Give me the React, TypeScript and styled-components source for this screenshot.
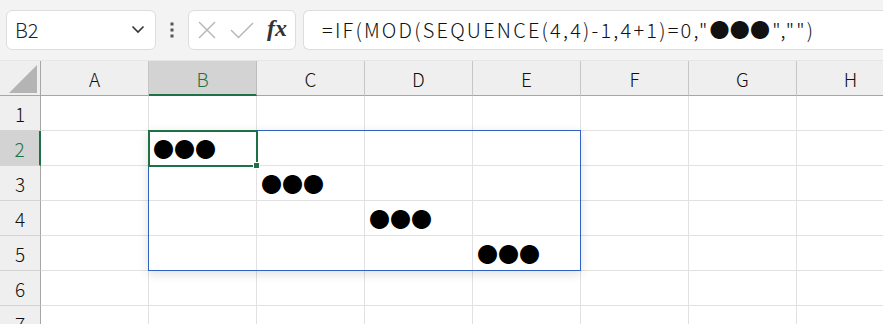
import React from 'react'
import styled, { createGlobalStyle } from 'styled-components'

const GlobalStyle = createGlobalStyle`
  html, body {
    margin: 0;
    padding: 0;
    background: #ffffff;
    overflow: hidden;
  }
  body {
    font-family: "Noto Sans CJK JP", "Noto Sans", sans-serif;
  }
`

const GREEN = '#1e7145'
const BLUE = '#2f62c3'

const Page = styled.div`
  width: 883px;
  height: 324px;
  overflow: hidden;
  background: #ffffff;
`

const Toolbar = styled.div`
  height: 61px;
  box-sizing: border-box;
  display: flex;
  align-items: center;
  padding: 0 0 1px 6px;
  background: #f3f3f3;
  border-bottom: 1px solid #e6e6e6;
`

const Box = styled.div<{ $w?: number }>`
  height: 40px;
  box-sizing: border-box;
  width: ${(p) => (p.$w ? `${p.$w}px` : 'auto')};
  flex: ${(p) => (p.$w ? '0 0 auto' : '1 1 auto')};
  background: #ffffff;
  border: 1px solid #dddddd;
  border-radius: 6px;
  display: flex;
  align-items: center;
`

const NameBox = styled(Box)`
  padding: 0 10px 0 8px;
  justify-content: space-between;
  font-size: 20px;
  font-weight: 300;
  color: #222;
`

const Grip = styled.div`
  width: 32px;
  display: flex;
  justify-content: center;
`

const FxBox = styled(Box)`
  padding: 0 8px;
  justify-content: space-between;
`

const Fx = styled.span`
  font-family: "Liberation Serif", serif;
  font-style: italic;
  font-weight: bold;
  font-size: 24px;
  color: #333;
  margin-top: -3px;
`

const FormulaBox = styled(Box)`
  margin-left: 7px;
  border-right: none;
  border-radius: 6px 0 0 6px;
  padding-left: 18px;
  font-size: 20px;
  font-weight: 300;
  letter-spacing: 2.2px;
  color: #111;
  white-space: nowrap;
`

const Dots = styled.span`
  letter-spacing: 0.3px;
  margin-right: 2px;
`

const Sheet = styled.div`
  display: grid;
  grid-template-columns: 41px repeat(8, 108px);
  grid-template-rows: 35px repeat(8, 35px);
`

const Corner = styled.div`
  background: #efefef;
  border-right: 1px solid #a6a6a6;
  border-bottom: 1px solid #a6a6a6;
  display: flex;
  align-items: flex-end;
  justify-content: flex-end;
  padding: 0 3px 2px 0;
`

const ColHead = styled.div<{ $active?: boolean }>`
  background: ${(p) => (p.$active ? '#d3d3d3' : '#efefef')};
  color: ${(p) => (p.$active ? GREEN : '#111')};
  border-right: 1px solid ${(p) => (p.$active ? '#bdbdbd' : '#c6c6c6')};
  border-bottom: ${(p) => (p.$active ? `2px solid ${GREEN}` : '1px solid #a6a6a6')};
  display: flex;
  align-items: center;
  justify-content: center;
  font-size: 19px;
  font-weight: 300;
  padding-top: ${(p) => (p.$active ? '1px' : '0')};
`

const RowHead = styled.div<{ $active?: boolean }>`
  background: ${(p) => (p.$active ? '#d3d3d3' : '#efefef')};
  color: ${(p) => (p.$active ? GREEN : '#111')};
  border-right: ${(p) => (p.$active ? `2px solid ${GREEN}` : '1px solid #a6a6a6')};
  border-bottom: 1px solid #d4d4d4;
  display: flex;
  align-items: center;
  justify-content: center;
  font-size: 19px;
  font-weight: 300;
`

const Cell = styled.div<{ $col: number; $row: number }>`
  grid-column: ${(p) => p.$col + 2};
  grid-row: ${(p) => p.$row + 1};
  border-right: 1px solid #e1e1e1;
  border-bottom: 1px solid #e1e1e1;
  display: flex;
  align-items: center;
  padding-left: 4px;
  font-size: 21px;
  line-height: 1;
  color: #000;
  white-space: nowrap;
`

const SpillRange = styled.div`
  grid-column: 3 / 7;
  grid-row: 3 / 7;
  margin: -1px 0 0 -1px;
  border: 1px solid ${BLUE};
  box-shadow: 0 3px 10px rgba(0, 0, 0, 0.12);
  pointer-events: none;
  z-index: 1;
`

const Selection = styled.div`
  grid-column: 3 / 4;
  grid-row: 3 / 4;
  margin: -1px;
  border: 2px solid ${GREEN};
  position: relative;
  pointer-events: none;
  z-index: 2;
`

const FillHandle = styled.div`
  position: absolute;
  right: -4px;
  bottom: -4px;
  width: 5px;
  height: 5px;
  background: ${GREEN};
  border: 1px solid #ffffff;
`

const cols = ['A', 'B', 'C', 'D', 'E', 'F', 'G', 'H']
const rows = [1, 2, 3, 4, 5, 6, 7, 8]
const DOTS = '●●●'

export default function App() {
  return (
    <Page>
      <GlobalStyle />
      <Toolbar>
        <NameBox $w={150}>
          <span>B2</span>
          <svg width="14" height="9" viewBox="0 0 14 9">
            <path d="M1.5 1.5 L7 7 L12.5 1.5" fill="none" stroke="#333" strokeWidth="1.6" />
          </svg>
        </NameBox>
        <Grip>
          <svg width="4" height="16" viewBox="0 0 4 16">
            <rect x="0.5" y="0.5" width="3" height="3" fill="#555" />
            <rect x="0.5" y="6.5" width="3" height="3" fill="#555" />
            <rect x="0.5" y="12.5" width="3" height="3" fill="#555" />
          </svg>
        </Grip>
        <FxBox $w={108}>
          <svg width="20" height="20" viewBox="0 0 20 20">
            <path d="M2 2 L18 18 M18 2 L2 18" stroke="#b8b8b8" strokeWidth="1.5" fill="none" />
          </svg>
          <svg width="24" height="18" viewBox="0 0 24 18">
            <path d="M1 9 L8.5 16.5 L23 2" stroke="#b8b8b8" strokeWidth="1.5" fill="none" />
          </svg>
          <Fx>fx</Fx>
        </FxBox>
        <FormulaBox>
          =IF(MOD(SEQUENCE(4,4)-1,4+1)=0,"<Dots>{DOTS}</Dots>","")
        </FormulaBox>
      </Toolbar>
      <Sheet>
        <Corner>
          <svg width="28" height="28" viewBox="0 0 28 28">
            <path d="M0 28 L28 0 L28 28 Z" fill="#b4b4b4" />
          </svg>
        </Corner>
        {cols.map((c) => (
          <ColHead key={c} $active={c === 'B'}>
            {c}
          </ColHead>
        ))}
        {rows.map((r) => (
          <React.Fragment key={r}>
            <RowHead $active={r === 2} style={{ gridRow: r + 1 }}>
              {r}
            </RowHead>
            {cols.map((c, ci) => (
              <Cell key={c} $col={ci} $row={r}>
                {ci >= 1 && ci <= 4 && r === ci + 1 ? DOTS : ''}
              </Cell>
            ))}
          </React.Fragment>
        ))}
        <SpillRange />
        <Selection>
          <FillHandle />
        </Selection>
      </Sheet>
    </Page>
  )
}
